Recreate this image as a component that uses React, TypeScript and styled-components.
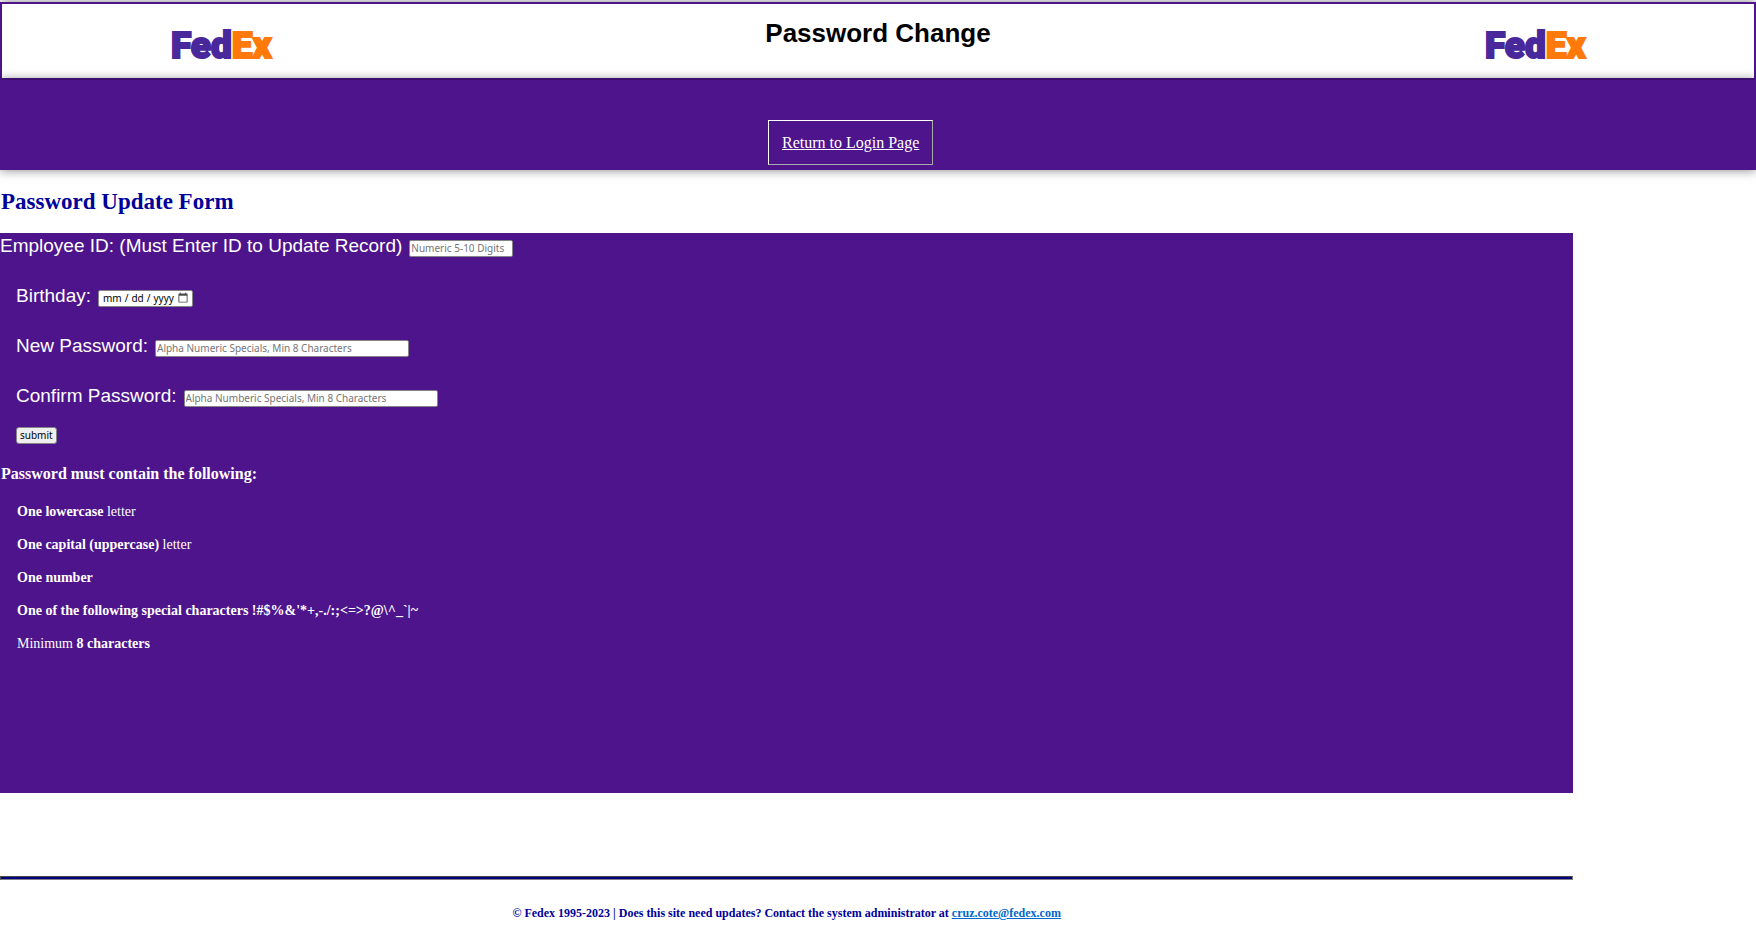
import React from "react";
import styled, { createGlobalStyle } from "styled-components";

const purple = "#4d148c";
const navy = "#000099";

const GlobalStyle = createGlobalStyle`
  * { box-sizing: border-box; }
  body {
    margin: 0;
    background: #fff;
    font-family: "Baskerville Old Face", "Liberation Serif", serif;
  }
`;

const Masthead = styled.header`
  display: grid;
  grid-template-columns: 1fr 2fr 1fr;
  justify-items: center;
  height: 78px;
  margin-top: 2px;
  border: 2px solid ${purple};
  background: #fff;
  box-shadow: 0 0 10px rgba(0, 0, 0, 0.5);
`;

const LogoSvg = styled.svg`
  display: block;
  margin-top: 14px;
  font: 900 37px Roboto, sans-serif;
  stroke-width: 2px;
`;

const Title = styled.h1`
  margin: 13px 0 0;
  font: bold 26px/32px "Liberation Sans", Arial, sans-serif;
  color: #000;
`;

const Nav = styled.nav`
  position: relative;
  display: flex;
  padding: 40px 0 5px calc(50% - 110px);
  background: ${purple};
  box-shadow: 0 0 10px rgba(0, 0, 0, 0.5);
`;

const NavLink = styled.a`
  padding: 13px;
  border: 1px solid;
  border-color: #fff #aaa #aaa #fff;
  font-size: 16px;
  line-height: 17px;
  color: #fff;
`;

const Main = styled.main`
  width: 89.6%;
`;

const FormHeading = styled.h2`
  margin: 0;
  padding: 19px 1px 18px;
  font-size: 23px;
  line-height: 26px;
  color: ${navy};
`;

const Panel = styled.section`
  padding-bottom: 140px;
  background: ${purple};
  color: #fff;
`;

const Form = styled.form`
  display: flex;
  flex-direction: column;
  gap: 25px;
`;

const Field = styled.div<{ $indent?: boolean }>`
  display: flex;
  align-items: baseline;
  gap: 7px;
  height: 25px;
  padding-left: ${(p) => (p.$indent ? 16 : 0)}px;
`;

const Label = styled.label`
  font: 19px/25px "Liberation Sans", Arial, sans-serif;
`;

const Input = styled.input<{ $width: number }>`
  width: ${(p) => p.$width}px;
  height: 17px;
  padding: 1px;
  border: 1px solid #858585;
  border-radius: 2px;
  background: #fff;
  color: #000;
  font: 10px Tahoma, "Noto Sans", sans-serif;

  &::placeholder { color: #757575; }
`;

const DateInput = styled(Input)`
  padding-left: 3px;

  &::-webkit-datetime-edit-text {
    padding: 0 2px;
  }

  &::-webkit-calendar-picker-indicator {
    width: 12px;
    height: 12px;
    margin: 0 2px 0 0;
    padding: 0;
    opacity: 0.7;
  }
`;

const Submit = styled.button`
  align-self: flex-start;
  height: 17px;
  margin: -6px 0 0 16px;
  padding: 0 3px;
  border: 1px solid #858585;
  border-radius: 3px;
  background: #efefef;
  color: #000;
  font: 10px/15px Tahoma, "Noto Sans", sans-serif;
`;

const RulesHeading = styled.h3`
  margin: 0;
  padding: 20px 0 19px 1px;
  font-size: 16px;
  line-height: 20px;
`;

const Rules = styled.ul`
  display: flex;
  flex-direction: column;
  gap: 15px;
  margin: 0;
  padding: 0 0 0 17px;
  list-style: none;
  font-size: 14px;
  line-height: 18px;
`;

const Footer = styled.footer`
  padding-top: 83px;
  font-size: 12px;
  font-weight: bold;
  line-height: 16px;
  text-align: center;
  color: ${navy};
`;

const Rule = styled.hr`
  height: 4px;
  margin: 0;
  border: 1px solid;
  border-color: #4c4c4c #808080 #808080 #4c4c4c;
  background: #000080;
`;

const Copyright = styled.p`
  margin: 0;
  padding: 25px 0 5px;
`;

const MailLink = styled.a`
  color: #0066cc;
`;

const Logo = () => (
  <LogoSvg width="106" height="52" role="img" aria-label="FedEx">
    <text x="3" y="40" fill="#48289b" stroke="#48289b">
      Fed<tspan fill="#ff7a0a" stroke="#ff7a0a">Ex</tspan>
    </text>
  </LogoSvg>
);

export default function App() {
  return (
    <>
      <GlobalStyle />
      <Masthead>
        <Logo />
        <Title>Password Change</Title>
        <Logo />
      </Masthead>
      <Nav>
        <NavLink href="#login">Return to Login Page</NavLink>
      </Nav>
      <Main>
        <FormHeading>Password Update Form</FormHeading>
        <Panel>
          <Form>
            <Field>
              <Label htmlFor="employee">Employee ID: (Must Enter ID to Update Record)</Label>
              <Input id="employee" $width={104} type="text" placeholder="Numeric 5-10 Digits" />
            </Field>
            <Field $indent>
              <Label htmlFor="birthday">Birthday:</Label>
              <DateInput id="birthday" $width={95} type="date" />
            </Field>
            <Field $indent>
              <Label htmlFor="password">New Password:</Label>
              <Input id="password" $width={254} type="password" placeholder="Alpha Numeric Specials, Min 8 Characters" />
            </Field>
            <Field $indent>
              <Label htmlFor="confirm">Confirm Password:</Label>
              <Input id="confirm" $width={254} type="password" placeholder="Alpha Numberic Specials, Min 8 Characters" />
            </Field>
            <Submit type="submit">submit</Submit>
          </Form>
          <RulesHeading>Password must contain the following:</RulesHeading>
          <Rules>
            <li><b>One lowercase</b> letter</li>
            <li><b>One capital (uppercase)</b> letter</li>
            <li><b>One number</b></li>
            <li><b>{"One of the following special characters !#$%&'*+,-./:;<=>?@\\^_`|~"}</b></li>
            <li>Minimum <b>8 characters</b></li>
          </Rules>
        </Panel>
        <Footer>
          <Rule />
          <Copyright>
            © Fedex 1995-2023 | Does this site need updates? Contact the system administrator at{" "}
            <MailLink href="mailto:cruz.cote@fedex.com">cruz.cote@fedex.com</MailLink>
          </Copyright>
        </Footer>
      </Main>
    </>
  );
}
